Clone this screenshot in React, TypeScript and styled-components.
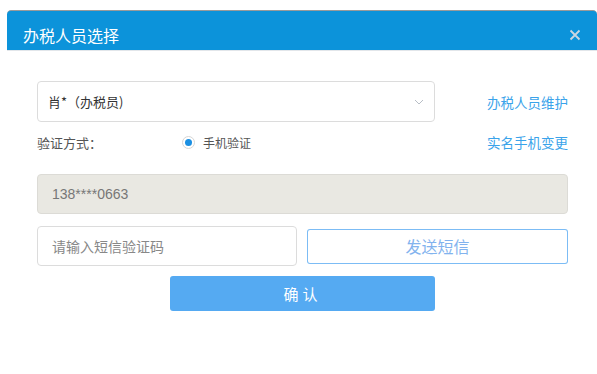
import React from 'react';
import styled, { createGlobalStyle } from 'styled-components';

const GlobalStyle = createGlobalStyle`
  html, body {
    margin: 0;
    padding: 0;
    background: #fff;
  }
  body {
    font-family: 'Liberation Sans', 'Noto Sans CJK SC', Arial, sans-serif;
  }
`;

const Dialog = styled.div`
  margin: 10px 0 0 7px;
  width: 590px;
  height: 349px;
  background: #fff;
  border-radius: 4px 4px 0 0;
  overflow: hidden;
`;

const Header = styled.div`
  height: 41px;
  box-sizing: border-box;
  background: #0c93da;
  border-top: 1px solid #9a9a9a;
  border-bottom: 1px solid #e2e6ea;
  border-radius: 4px 4px 0 0;
  display: flex;
  align-items: flex-start;
  justify-content: space-between;
  padding: 14px 16px 0 16px;
`;

const Title = styled.div`
  color: #fff;
  font-size: 16px;
  line-height: 20px;
  font-family: 'Noto Sans CJK SC', sans-serif;
`;

const Close = styled.button`
  border: none;
  background: none;
  padding: 0;
  margin-top: 4px;
  width: 12px;
  height: 12px;
  cursor: pointer;
  display: flex;
`;

const Body = styled.div`
  padding: 30px 29px 0 30px;
`;

const Row = styled.div<{ $top?: number; $height?: number }>`
  display: flex;
  align-items: center;
  margin-top: ${p => p.$top ?? 0}px;
  ${p => (p.$height ? `height: ${p.$height}px;` : '')}
`;

const Select = styled.div`
  width: 398px;
  height: 41px;
  box-sizing: border-box;
  border: 1px solid #dcdcdc;
  border-radius: 4px;
  display: flex;
  align-items: center;
  justify-content: space-between;
  padding: 0 10px;
  font-size: 13px;
  color: #333;
  font-family: 'Noto Sans CJK SC', sans-serif;
`;

const Link = styled.a`
  margin-left: auto;
  font-size: 13.5px;
  color: #3aa3ea;
  text-decoration: none;
  font-family: 'Noto Sans CJK SC', sans-serif;
  cursor: pointer;
`;

const Label = styled.div`
  width: 145px;
  font-size: 13px;
  color: #555;
  font-family: 'Noto Sans CJK SC', sans-serif;
`;

const RadioWrap = styled.label`
  display: flex;
  align-items: center;
  gap: 8px;
  font-size: 12px;
  color: #555;
  font-family: 'Noto Sans CJK SC', sans-serif;
`;

const RadioDot = styled.span`
  width: 13px;
  height: 13px;
  box-sizing: border-box;
  border: 1px solid #d6d6d6;
  border-radius: 50%;
  display: flex;
  align-items: center;
  justify-content: center;
  &::after {
    content: '';
    width: 7px;
    height: 7px;
    border-radius: 50%;
    background: #1b8fe2;
  }
`;

const Field = styled.div<{ $disabled?: boolean; $width?: number }>`
  width: ${p => (p.$width ? `${p.$width}px` : '100%')};
  height: 40px;
  box-sizing: border-box;
  border: 1px solid ${p => (p.$disabled ? '#dcdbd6' : '#dcdcdc')};
  background: ${p => (p.$disabled ? '#e9e8e2' : '#fff')};
  border-radius: 4px;
  display: flex;
  align-items: center;
  padding-left: 14px;
  font-size: 14px;
  color: #777;
  flex-shrink: 0;
`;

const Placeholder = styled.span`
  color: #888;
  font-family: 'Noto Sans CJK SC', sans-serif;
`;

const SendButton = styled.button`
  flex: 1;
  margin-left: 10px;
  height: 35px;
  background: #fff;
  border: none;
  box-shadow: inset 0 0 0 1px #7cbcf5;
  border-radius: 3px;
  color: #82b3ee;
  font-size: 16px;
  font-family: 'Noto Sans CJK SC', sans-serif;
  cursor: pointer;
`;

const ConfirmButton = styled.button`
  display: block;
  margin: 10px auto 0;
  width: 265px;
  height: 35px;
  background: #55aaf2;
  border: none;
  border-radius: 3px;
  color: #fff;
  font-size: 15px;
  letter-spacing: 4px;
  font-family: 'Noto Sans CJK SC', sans-serif;
  cursor: pointer;
`;

const App: React.FC = () => (
  <>
    <GlobalStyle />
    <Dialog>
      <Header>
        <Title>办税人员选择</Title>
        <Close aria-label="关闭">
          <svg width="12" height="12" viewBox="0 0 12 12">
            <path d="M1.5 1.5L10.5 10.5M10.5 1.5L1.5 10.5" stroke="#cdd6e0" strokeWidth="1.8" />
          </svg>
        </Close>
      </Header>
      <Body>
        <Row>
          <Select>
            <span>肖*（办税员)</span>
            <svg width="10" height="6" viewBox="0 0 10 6">
              <path d="M1 1L5 5L9 1" stroke="#b8bec6" strokeWidth="1" fill="none" />
            </svg>
          </Select>
          <Link>办税人员维护</Link>
        </Row>
        <Row $top={10} $height={20}>
          <Label>验证方式：</Label>
          <RadioWrap>
            <RadioDot />
            手机验证
          </RadioWrap>
          <Link>实名手机变更</Link>
        </Row>
        <Row $top={22}>
          <Field $disabled>138****0663</Field>
        </Row>
        <Row $top={12}>
          <Field $width={260}>
            <Placeholder>请输入短信验证码</Placeholder>
          </Field>
          <SendButton>发送短信</SendButton>
        </Row>
        <ConfirmButton>确认</ConfirmButton>
      </Body>
    </Dialog>
  </>
);

export default App;
